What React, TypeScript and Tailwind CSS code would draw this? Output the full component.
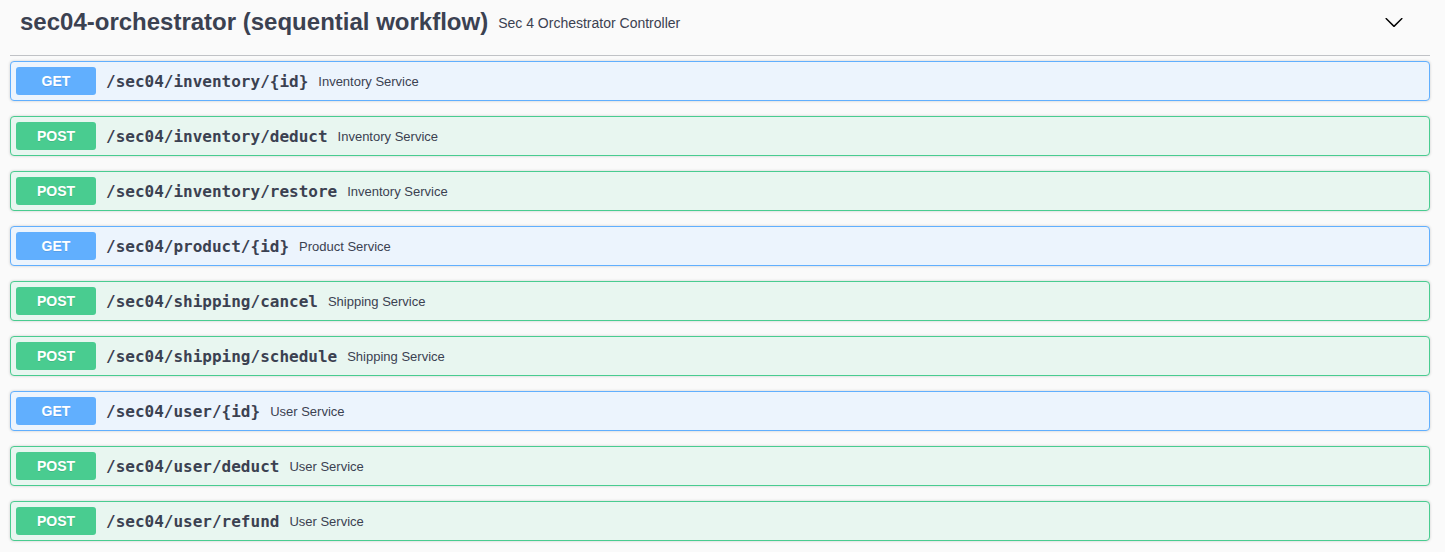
import React from "react";

type Op = { method: "GET" | "POST"; path: string; desc: string };

const ops: Op[] = [
  { method: "GET", path: "/sec04/inventory/{id}", desc: "Inventory Service" },
  { method: "POST", path: "/sec04/inventory/deduct", desc: "Inventory Service" },
  { method: "POST", path: "/sec04/inventory/restore", desc: "Inventory Service" },
  { method: "GET", path: "/sec04/product/{id}", desc: "Product Service" },
  { method: "POST", path: "/sec04/shipping/cancel", desc: "Shipping Service" },
  { method: "POST", path: "/sec04/shipping/schedule", desc: "Shipping Service" },
  { method: "GET", path: "/sec04/user/{id}", desc: "User Service" },
  { method: "POST", path: "/sec04/user/deduct", desc: "User Service" },
  { method: "POST", path: "/sec04/user/refund", desc: "User Service" },
];

function Row({ op }: { op: Op }) {
  const isGet = op.method === "GET";
  return (
    <div
      className={
        isGet
          ? "mb-[15px] flex h-[40px] items-center rounded-[4px] border border-[#61affe] bg-[#ecf4fd] p-[5px] shadow-[0_0_3px_rgba(0,0,0,0.19)]"
          : "mb-[15px] flex h-[40px] items-center rounded-[4px] border border-[#49cc90] bg-[#e8f6f0] p-[5px] shadow-[0_0_3px_rgba(0,0,0,0.19)]"
      }
    >
      <span
        className={
          isGet
            ? "flex h-[28px] w-[80px] items-center justify-center rounded-[3px] bg-[#61affe] pt-[1px] text-[14px] font-bold text-white [text-shadow:0_1px_0_rgba(0,0,0,0.1)]"
            : "flex h-[28px] w-[80px] items-center justify-center rounded-[3px] bg-[#49cc90] pt-[1px] text-[14px] font-bold text-white [text-shadow:0_1px_0_rgba(0,0,0,0.1)]"
        }
        style={{ fontFamily: '"Liberation Sans", Arial, sans-serif' }}
      >
        {op.method}
      </span>
      <span
        className="px-[10px] pt-[2px] text-[16px] font-bold text-[#3b4151]"
        style={{ fontFamily: '"DejaVu Sans Mono", monospace' }}
      >
        {op.path}
      </span>
      <span
        className="pt-[2px] text-[13px] text-[#3b4151]"
        style={{ fontFamily: '"Liberation Sans", Arial, sans-serif' }}
      >
        {op.desc}
      </span>
    </div>
  );
}

export default function App() {
  return (
    <div
      className="min-h-[552px] w-full bg-[#fafafa] pl-[10px] pr-[15px]"
      style={{ fontFamily: '"Liberation Sans", Arial, sans-serif' }}
    >
      <div className="mb-[5px] flex h-[56px] items-center border-b border-[rgba(59,65,81,0.3)] pl-[10px] pr-[26px] pb-[17px] pt-[5px]">
        <span className="text-[24px] font-bold text-[#3b4151]">
          sec04-orchestrator (sequential workflow)
        </span>
        <span className="flex-1 px-[10px] pt-[3px] text-[14px] text-[#3b4151]">
          Sec 4 Orchestrator Controller
        </span>
        <svg width="20" height="20" viewBox="0 0 20 20">
          <path
            fill="#000"
            d="M17.418 6.109c.272-.268.709-.268.979 0s.271.701 0 .969l-7.908 7.83c-.27.268-.707.268-.979 0l-7.908-7.83c-.27-.268-.27-.701 0-.969.271-.268.709-.268.979 0L10 13.25l7.418-7.141z"
          />
        </svg>
      </div>
      {ops.map((op) => (
        <Row key={op.path} op={op} />
      ))}
    </div>
  );
}
